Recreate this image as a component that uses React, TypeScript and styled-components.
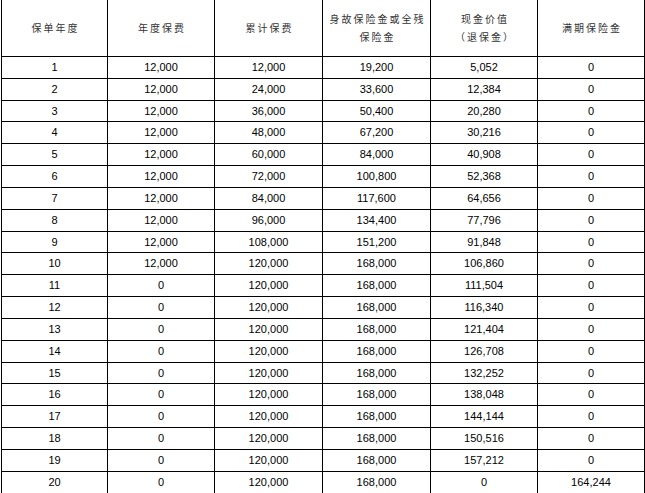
import React from "react";
import styled, { createGlobalStyle } from "styled-components";

const GlobalStyle = createGlobalStyle`
  html, body {
    margin: 0;
    padding: 0;
    background: #fff;
  }
  body {
    font-family: "Liberation Sans", Arial, sans-serif;
    overflow: hidden;
  }
`;

const deathValues = [
  19200, 33600, 50400, 67200, 84000, 100800, 117600, 134400, 151200, 168000,
];

const cashValues = [
  5052, 12384, 20280, 30216, 40908, 52368, 64656, 77796, 91848, 106860,
  111504, 116340, 121404, 126708, 132252, 138048, 144144, 150516, 157212, 0,
];

// premiums are paid for the first 10 years, then everything is flat
const rows = cashValues.map((cash, i) => {
  const year = i + 1;
  const paid = Math.min(year, 10);
  return [
    year,
    year <= 10 ? 12000 : 0,
    paid * 12000,
    deathValues[paid - 1],
    cash,
    year === 20 ? 164244 : 0,
  ];
});

const headers: string[][] = [
  ["保单年度"],
  ["年度保费"],
  ["累计保费"],
  ["身故保险金或全残", "保险金"],
  ["现金价值", "（退保金）"],
  ["满期保险金"],
];

const fmt = (n: number) => n.toLocaleString("en-US");

const App: React.FC = () => {
  return (
    <>
      <GlobalStyle />
      <Table>
        {headers.map((lines) => (
          <HeadCell key={lines[0]}>
            {lines.map((line) => (
              <HeadLine key={line}>{line}</HeadLine>
            ))}
          </HeadCell>
        ))}
        {rows.map((row) =>
          row.map((value, col) => (
            <Cell key={`${row[0]}-${col}`}>{fmt(value)}</Cell>
          ))
        )}
      </Table>
    </>
  );
};

export default App;

// the black background shows through the 1px gaps as the grid lines
const Table = styled.div`
  display: grid;
  grid-template-columns: 105px 106px 107px 107px 106px 106px;
  grid-template-rows: 56px repeat(20, 20.84px);
  gap: 1px;
  padding: 1px;
  margin: -1px 0 0 1px;
  width: max-content;
  background: #000;
`;

const Cell = styled.div`
  display: flex;
  align-items: center;
  justify-content: center;
  background: #fff;
  color: #000;
  font-size: 11px;
  line-height: 1;
`;

const HeadCell = styled(Cell)`
  flex-direction: column;
  font-family: "Noto Sans CJK SC", sans-serif;
  font-size: 10px;
  line-height: 18px;
  color: #333;
`;

const HeadLine = styled.span`
  letter-spacing: 2px;
  padding-left: 2px;
`;
